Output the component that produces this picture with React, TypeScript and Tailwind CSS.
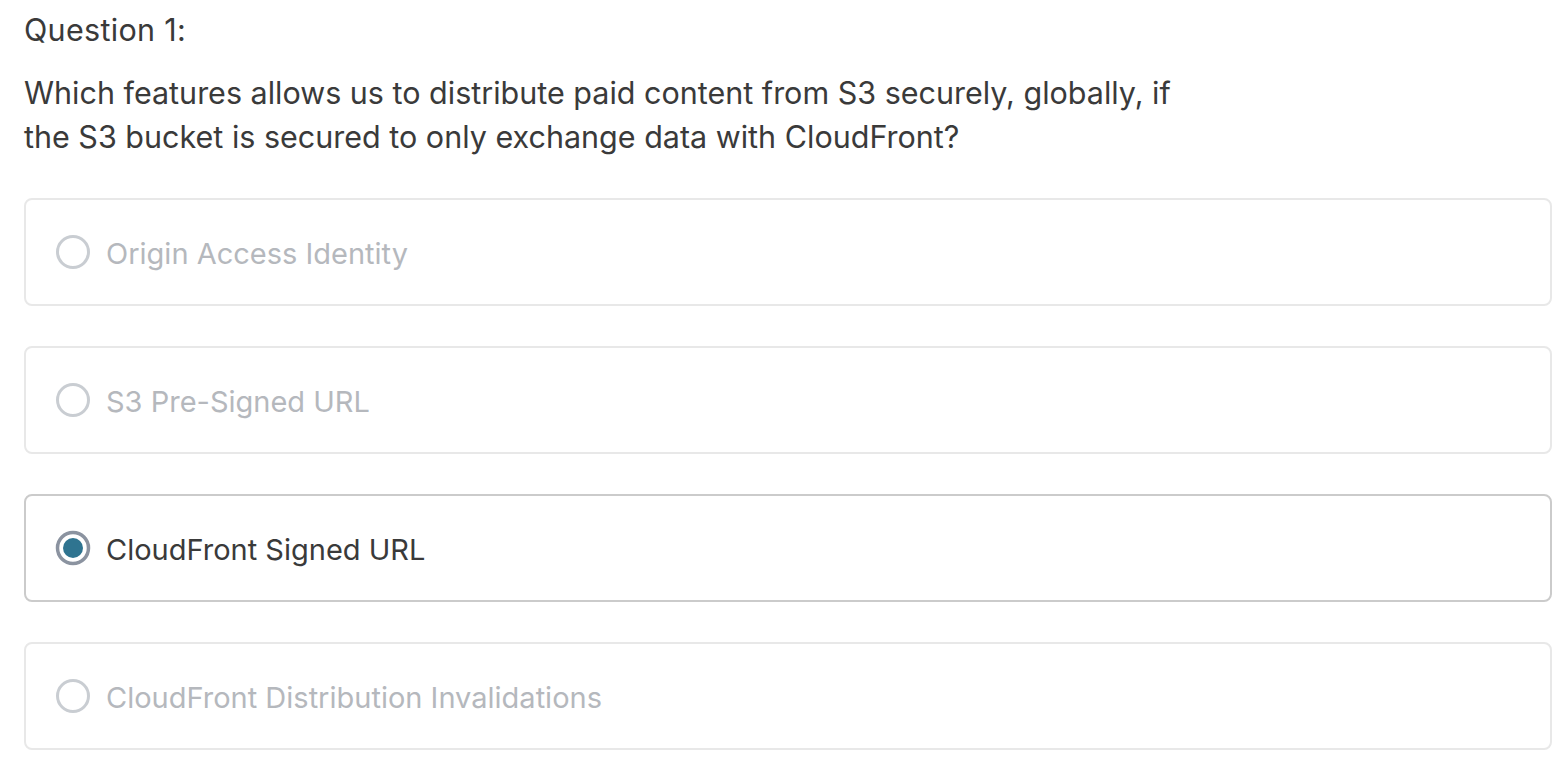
import React from "react";

const options = [
  { label: "Origin Access Identity", selected: false },
  { label: "S3 Pre-Signed URL", selected: false },
  { label: "CloudFront Signed URL", selected: true },
  { label: "CloudFront Distribution Invalidations", selected: false },
];

function Radio({ selected }: { selected: boolean }) {
  return (
    <svg width="36" height="36" viewBox="0 0 36 36" className="shrink-0">
      {selected ? (
        <>
          <circle cx="18" cy="18" r="15.5" fill="white" stroke="#8b93a0" strokeWidth="3.5" />
          <circle cx="18" cy="18" r="10" fill="#2f7490" />
        </>
      ) : (
        <circle cx="18" cy="18" r="15.5" fill="white" stroke="#c9cdd2" strokeWidth="3" />
      )}
    </svg>
  );
}

export default function App() {
  return (
    <div
      className="w-[1568px] h-[768px] bg-white overflow-hidden pl-[24px] pr-[16px]"
      style={{ fontFamily: "Inter, 'Noto Sans', sans-serif" }}
    >
      <div className="pt-[10px] text-[30.5px] leading-[40px] text-[#3a3a3a] tracking-[0.3px]">Question 1:</div>
      <div className="mt-[21px] text-[30.5px] leading-[44px] text-[#3a3a3a]">
        Which features allows us to distribute paid content from S3 securely, globally, if
        <br />
        the S3 bucket is secured to only exchange data with CloudFront?
      </div>
      <div className="mt-[39px] flex flex-col gap-[40px]">
        {options.map((o) => (
          <div
            key={o.label}
            className={
              "h-[108px] rounded-[8px] border-2 flex items-center pl-[29px] gap-[15px] " +
              (o.selected ? "border-[#cbcbcb]" : "border-[#e8e8e8]")
            }
          >
            <Radio selected={o.selected} />
            <span
              className={
                "pt-[3px] text-[29px] leading-[40px] " +
                (o.selected ? "text-[#3a3a3a]" : "text-[#b5b8bd]")
              }
            >
              {o.label}
            </span>
          </div>
        ))}
      </div>
    </div>
  );
}
